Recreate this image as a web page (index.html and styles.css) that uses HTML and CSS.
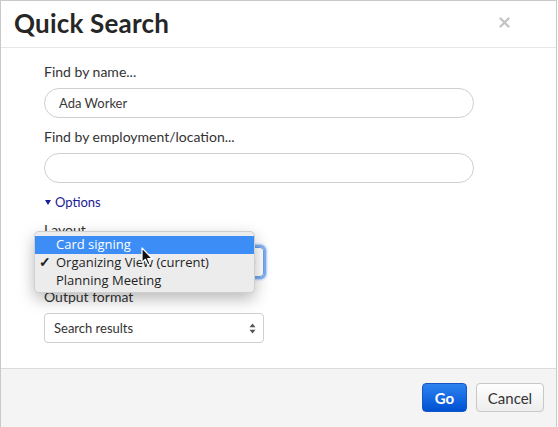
FILE: index.html
```html
<!DOCTYPE html>
<html>
<head>
<meta charset="utf-8">
<link rel="stylesheet" href="styles.css">
</head>
<body>
<div class="dialog">
  <div class="header">
    <h1 class="title">Quick Search</h1>
    <svg class="close" width="11" height="11" viewBox="0 0 11 11"><path d="M1.5 1.5 L9.5 9.5 M9.5 1.5 L1.5 9.5" stroke="#c4c4c4" stroke-width="2.4" stroke-linecap="round"/></svg>
  </div>
  <div class="body">
    <label class="label first">Find by name...</label>
    <div class="pill">Ada Worker</div>
    <label class="label second">Find by employment/location...</label>
    <div class="pill"></div>
    <div class="options"><span class="tri"></span>Options</div>
    <label class="label layout">Layout</label>
    <div class="select focused">
      <span>Organizing View (current)</span>
      <svg class="arrows" width="7" height="11" viewBox="0 0 7 11"><path d="M3.5 0.5 L6.5 4.2 L0.5 4.2 Z M3.5 10.5 L6.5 6.8 L0.5 6.8 Z" fill="#555"/></svg>
    </div>
    <label class="label output">Output format</label>
    <div class="select">
      <span>Search results</span>
      <svg class="arrows" width="7" height="11" viewBox="0 0 7 11"><path d="M3.5 0.5 L6.5 4.2 L0.5 4.2 Z M3.5 10.5 L6.5 6.8 L0.5 6.8 Z" fill="#555"/></svg>
    </div>
  </div>
  <div class="footer">
    <button class="btn go">Go</button>
    <button class="btn cancel">Cancel</button>
  </div>
  <div class="menu">
    <div class="item active">Card signing</div>
    <div class="item"><span class="check">✓</span>Organizing View (current)</div>
    <div class="item">Planning Meeting</div>
  </div>
  <svg class="cursor" width="13" height="20" viewBox="0 0 13 20"><path d="M1 1 L1 15.5 L4.4 12.3 L6.8 17.8 L9 16.8 L6.7 11.5 L11.2 11.5 Z" fill="#111" stroke="#fff" stroke-width="1.2" stroke-linejoin="round"/></svg>
</div>
</body>
</html>
```
FILE: styles.css
```css
* { box-sizing: border-box; }
html, body { margin: 0; padding: 0; background: #fff; }
body { width: 558px; height: 427px; overflow: hidden; font-family: Lato, "Open Sans", sans-serif; }
.dialog {
  position: relative;
  width: 557px;
  height: 428px;
  border: 1px solid #c9c9c9;
  border-bottom: none;
  display: flex;
  flex-direction: column;
  background: #fff;
}
.header {
  height: 47px;
  flex: none;
  border-bottom: 1px solid #e6e6e6;
  display: flex;
  align-items: center;
  justify-content: space-between;
  padding: 0 46px 0 13px;
}
.title {
  margin: 0;
  font-family: Lato, sans-serif;
  font-weight: 700;
  font-size: 26px;
  color: #262626;
  letter-spacing: 0.2px;
  position: relative;
  top: -1px;
}
.close { position: relative; top: -2px; }
.body {
  flex: none;
  height: 320px;
  padding: 14px 0 0 43px;
  display: flex;
  flex-direction: column;
  align-items: flex-start;
}
.label {
  display: block;
  font-size: 14px;
  line-height: 20px;
  height: 20px;
  color: #333;
}
.label.first { margin-bottom: 6px; }
.label.second { margin-top: 9px; margin-bottom: 6px; }
.pill {
  width: 430px;
  height: 30px;
  border: 1px solid #cfcfcf;
  border-radius: 15px;
  padding: 0 14px;
  font-size: 13px;
  line-height: 28px;
  color: #3a3a3a;
}
.options {
  margin-top: 9px;
  height: 20px;
  line-height: 20px;
  font-size: 13px;
  color: #1c1c96;
  display: flex;
  align-items: center;
}
.tri {
  width: 0; height: 0;
  border-left: 3.5px solid transparent;
  border-right: 3.5px solid transparent;
  border-top: 5px solid #1c1c96;
  margin: 0 4px 0 1px;
}
.label.layout { margin-top: 8px; margin-bottom: 7px; }
.label.output { margin-top: 10px; margin-bottom: 6px; }
.select {
  width: 220px;
  height: 30px;
  border: 1px solid #cfcfcf;
  border-radius: 4px;
  padding: 0 7px 0 9px;
  display: flex;
  align-items: center;
  justify-content: space-between;
  font-size: 13px;
  color: #333;
}
.select.focused { box-shadow: 0 0 0 2px #7aaef3, 0 0 2px 3px rgba(90,150,240,0.5); border-color: #6f9fe6; }
.footer {
  flex: 1;
  border-top: 1px solid #dcdcdc;
  background: #f4f4f4;
  display: flex;
  justify-content: flex-end;
  align-items: flex-start;
  padding: 14px 12px 0 0;
  gap: 9px;
}
.btn {
  height: 29px;
  border-radius: 4px;
  font-family: Lato, sans-serif;
  font-size: 15px;
  padding: 0;
  margin: 0;
}
.go {
  width: 45px;
  color: #fff;
  font-weight: 700;
  background: linear-gradient(#2d83f0, #0050d2);
  border: 1px solid #1356c4;
}
.cancel {
  width: 68px;
  color: #333;
  background: linear-gradient(#fefefe, #ededed);
  border: 1px solid #c8c8c8;
}
.menu {
  position: absolute;
  left: 33px;
  top: 230px;
  width: 221px;
  height: 62px;
  background: #ececec;
  border: 1px solid rgba(0,0,0,0.12);
  border-radius: 5px;
  box-shadow: 0 6px 16px rgba(0,0,0,0.28);
  padding-top: 4px;
  font-family: "Open Sans", sans-serif;
  font-size: 13px;
  color: #1e1e1e;
}
.item {
  height: 18px;
  line-height: 16px;
  padding-left: 21px;
  position: relative;
}
.item.active { background: #3c8ef6; color: #fff; }
.check { position: absolute; left: 4px; top: 0; font-size: 14px; font-weight: 700; }
.cursor { position: absolute; left: 140px; top: 246px; }
```
